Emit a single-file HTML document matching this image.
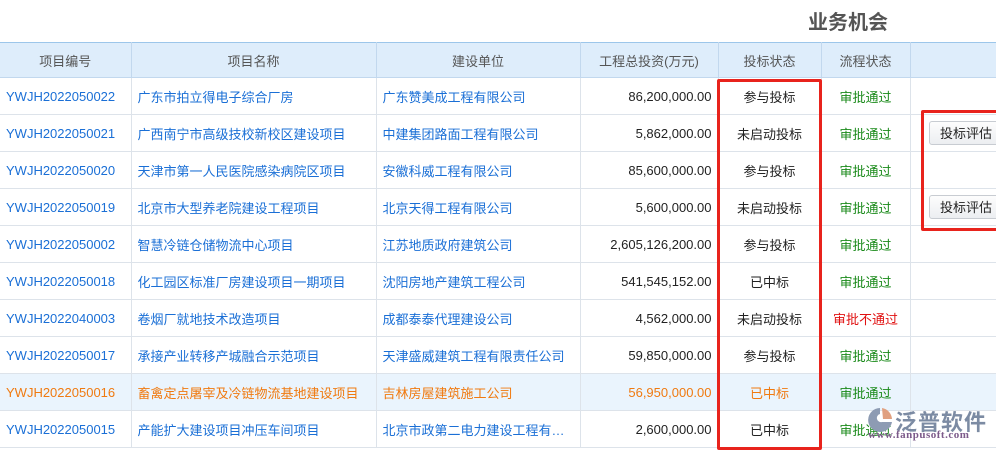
<!DOCTYPE html>
<html><head><meta charset="utf-8"><style>
body{margin:0;width:996px;height:452px;overflow:hidden;background:#fff;font-family:"Liberation Sans","Noto Sans CJK SC",sans-serif;font-size:13px;position:relative}
.title{position:absolute;left:808px;top:6px;font-size:20px;font-weight:bold;color:#555}
table{position:absolute;left:0;top:42px;border-collapse:collapse;table-layout:fixed;width:1010px}
td,th{height:36px;border:1px solid #dde3ea;padding:0 6px;white-space:nowrap;overflow:hidden}
th{height:34px;background:#deedfb;font-weight:normal;color:#555;border-color:#c2d8ee;border-top:1px solid #9cc6ea}
tr td:first-child,tr th:first-child{border-left:none}
td{color:#1a6fd6}
td.r{text-align:right;color:#222}
td.c{text-align:center;color:#222}
td.g{text-align:center;color:#1a8a1a}
td.red{text-align:center;color:#e01010}
tr.hl td{background:#eaf4fd;color:#f07a10}
tr.hl td.g{color:#1a8a1a}
.box{position:absolute;border:3px solid #e8231c;border-radius:2px}
.btn{position:absolute;left:929px;width:80px;height:24px;border:1px solid #c8ccd2;border-radius:3px;background:linear-gradient(#fdfdfd,#eceef1);color:#222;line-height:24px;padding-left:10px;box-sizing:border-box}
.logo{position:absolute;left:895px;top:405px;color:#6e7f9a;font-size:22px;font-weight:bold;letter-spacing:1px;opacity:.9}
.url{position:absolute;left:868px;top:429px;color:#7c5a8a;font-size:11px;font-family:"Liberation Serif",serif;font-weight:bold;letter-spacing:.5px}
</style></head><body>
<div class="title">业务机会</div>
<table>
<colgroup><col style="width:131px"><col style="width:245px"><col style="width:204px"><col style="width:138px"><col style="width:103px"><col style="width:89px"><col style="width:100px"></colgroup>
<tr><th>项目编号</th><th>项目名称</th><th>建设单位</th><th>工程总投资(万元)</th><th>投标状态</th><th>流程状态</th><th></th></tr>
<tr><td>YWJH2022050022</td><td>广东市拍立得电子综合厂房</td><td>广东赞美成工程有限公司</td><td class="r">86,200,000.00</td><td class="c">参与投标</td><td class="g">审批通过</td><td></td></tr>
<tr><td>YWJH2022050021</td><td>广西南宁市高级技校新校区建设项目</td><td>中建集团路面工程有限公司</td><td class="r">5,862,000.00</td><td class="c">未启动投标</td><td class="g">审批通过</td><td></td></tr>
<tr><td>YWJH2022050020</td><td>天津市第一人民医院感染病院区项目</td><td>安徽科威工程有限公司</td><td class="r">85,600,000.00</td><td class="c">参与投标</td><td class="g">审批通过</td><td></td></tr>
<tr><td>YWJH2022050019</td><td>北京市大型养老院建设工程项目</td><td>北京天得工程有限公司</td><td class="r">5,600,000.00</td><td class="c">未启动投标</td><td class="g">审批通过</td><td></td></tr>
<tr><td>YWJH2022050002</td><td>智慧冷链仓储物流中心项目</td><td>江苏地质政府建筑公司</td><td class="r">2,605,126,200.00</td><td class="c">参与投标</td><td class="g">审批通过</td><td></td></tr>
<tr><td>YWJH2022050018</td><td>化工园区标准厂房建设项目一期项目</td><td>沈阳房地产建筑工程公司</td><td class="r">541,545,152.00</td><td class="c">已中标</td><td class="g">审批通过</td><td></td></tr>
<tr><td>YWJH2022040003</td><td>卷烟厂就地技术改造项目</td><td>成都泰泰代理建设公司</td><td class="r">4,562,000.00</td><td class="c">未启动投标</td><td class="red">审批不通过</td><td></td></tr>
<tr><td>YWJH2022050017</td><td>承接产业转移产城融合示范项目</td><td>天津盛威建筑工程有限责任公司</td><td class="r">59,850,000.00</td><td class="c">参与投标</td><td class="g">审批通过</td><td></td></tr>
<tr class="hl"><td>YWJH2022050016</td><td>畜禽定点屠宰及冷链物流基地建设项目</td><td>吉林房屋建筑施工公司</td><td class="r" style="color:#f07a10">56,950,000.00</td><td class="c" style="color:#f07a10">已中标</td><td class="g">审批通过</td><td></td></tr>
<tr><td>YWJH2022050015</td><td>产能扩大建设项目冲压车间项目</td><td>北京市政第二电力建设工程有…</td><td class="r">2,600,000.00</td><td class="c">已中标</td><td class="g">审批通过</td><td></td></tr>
</table>
<div class="btn" style="top:121px">投标评估</div>
<div class="btn" style="top:195px">投标评估</div>
<div class="box" style="left:717px;top:79px;width:99px;height:365px"></div>
<div class="box" style="left:921px;top:110px;width:80px;height:115px"></div>
<svg style="position:absolute;left:866px;top:406px" width="28" height="28"><path d="M14 2 A12 12 0 1 0 26 16 L16 16 A4 4 0 1 1 14 8 Z" fill="#8d9bb3"/><path d="M16 2 A12 12 0 0 1 26 13 L17 13 Z" fill="#e0a080"/></svg>
<div class="logo">泛普软件</div>
<div class="url">www.fanpusoft.com</div>
</body></html>
